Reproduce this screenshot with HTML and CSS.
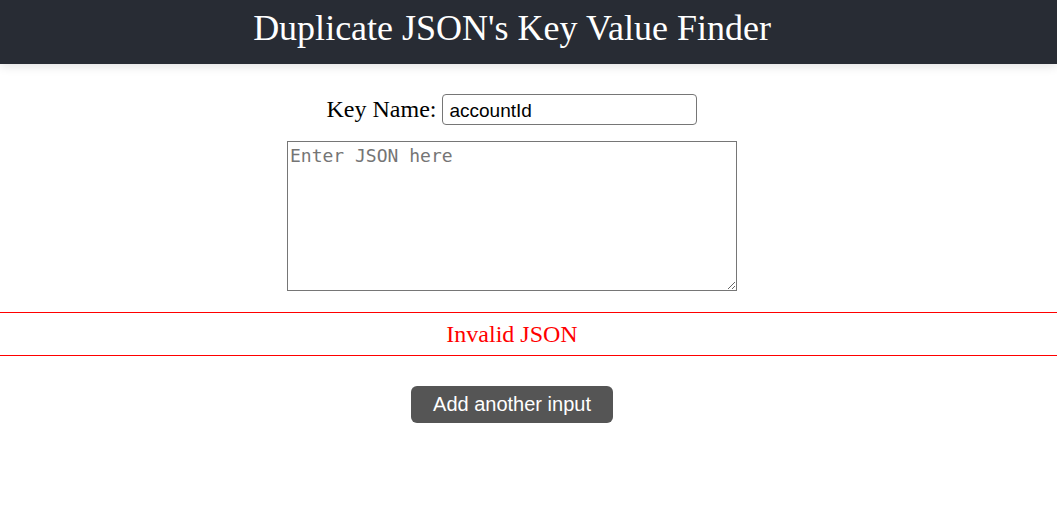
FILE: index.html
```html
<!DOCTYPE html>
<html>
<head>
<meta charset="utf-8">
<link rel="stylesheet" href="styles.css">
</head>
<body>
<header class="header">
  <h1 class="title">Duplicate JSON's Key Value Finder</h1>
</header>
<main class="main">
  <div class="key-row">
    <label class="key-label" for="key">Key Name:</label>
    <input id="key" class="key-input" type="text" value="accountId">
  </div>
  <div class="area-row">
    <textarea class="json-area" placeholder="Enter JSON here"></textarea>
  </div>
  <div class="error">Invalid JSON</div>
  <div class="btn-row">
    <button class="add-btn">Add another input</button>
  </div>
</main>
</body>
</html>
```

FILE: styles.css
```css
html, body {
  margin: 0;
  padding: 0;
  background: #fff;
  font-family: "Liberation Serif", "Times New Roman", serif;
}
.header {
  height: 64px;
  background: #282c34;
  box-shadow: 0 2px 10px rgba(0, 0, 0, 0.12);
  display: flex;
  align-items: center;
  justify-content: center;
  padding-right: 33px;
  position: relative;
}
.title {
  margin: 0;
  color: #fff;
  font-weight: normal;
  font-size: 36px;
  line-height: 1;
  position: relative;
  top: -4px;
}
.main {
  display: flex;
  flex-direction: column;
}
.key-row {
  display: flex;
  justify-content: center;
  align-items: center;
  gap: 6px;
  padding-right: 33px;
  margin-top: 30px;
  height: 31px;
}
.key-label {
  font-size: 24px;
  line-height: 1;
  position: relative;
  top: -1px;
}
.key-input {
  box-sizing: border-box;
  width: 255px;
  height: 31px;
  border: 1px solid #767676;
  border-radius: 4px;
  padding: 2px 6px 0;
  font-family: "Liberation Sans", Arial, sans-serif;
  font-size: 19px;
  color: #000;
}
.area-row {
  display: flex;
  justify-content: center;
  padding-right: 33px;
  margin-top: 16px;
}
.json-area {
  box-sizing: border-box;
  width: 450px;
  height: 150px;
  border: 1px solid #767676;
  padding: 3px 2px;
  margin: 0;
  font-family: "DejaVu Sans Mono", monospace;
  font-size: 18px;
  line-height: 1.2;
  display: block;
}
.json-area::placeholder {
  color: #757575;
}
.error {
  margin-top: 21px;
  border-top: 1px solid #f00;
  border-bottom: 1px solid #f00;
  color: #f00;
  font-size: 24px;
  text-align: center;
  padding-right: 33px;
  height: 42px;
  line-height: 42px;
}
.btn-row {
  display: flex;
  justify-content: center;
  padding-right: 33px;
  margin-top: 30px;
}
.add-btn {
  width: 202px;
  height: 37px;
  background: #555;
  color: #fff;
  border: none;
  border-radius: 6px;
  font-family: "Liberation Sans", Arial, sans-serif;
  font-size: 20px;
  padding: 0;
}
```
